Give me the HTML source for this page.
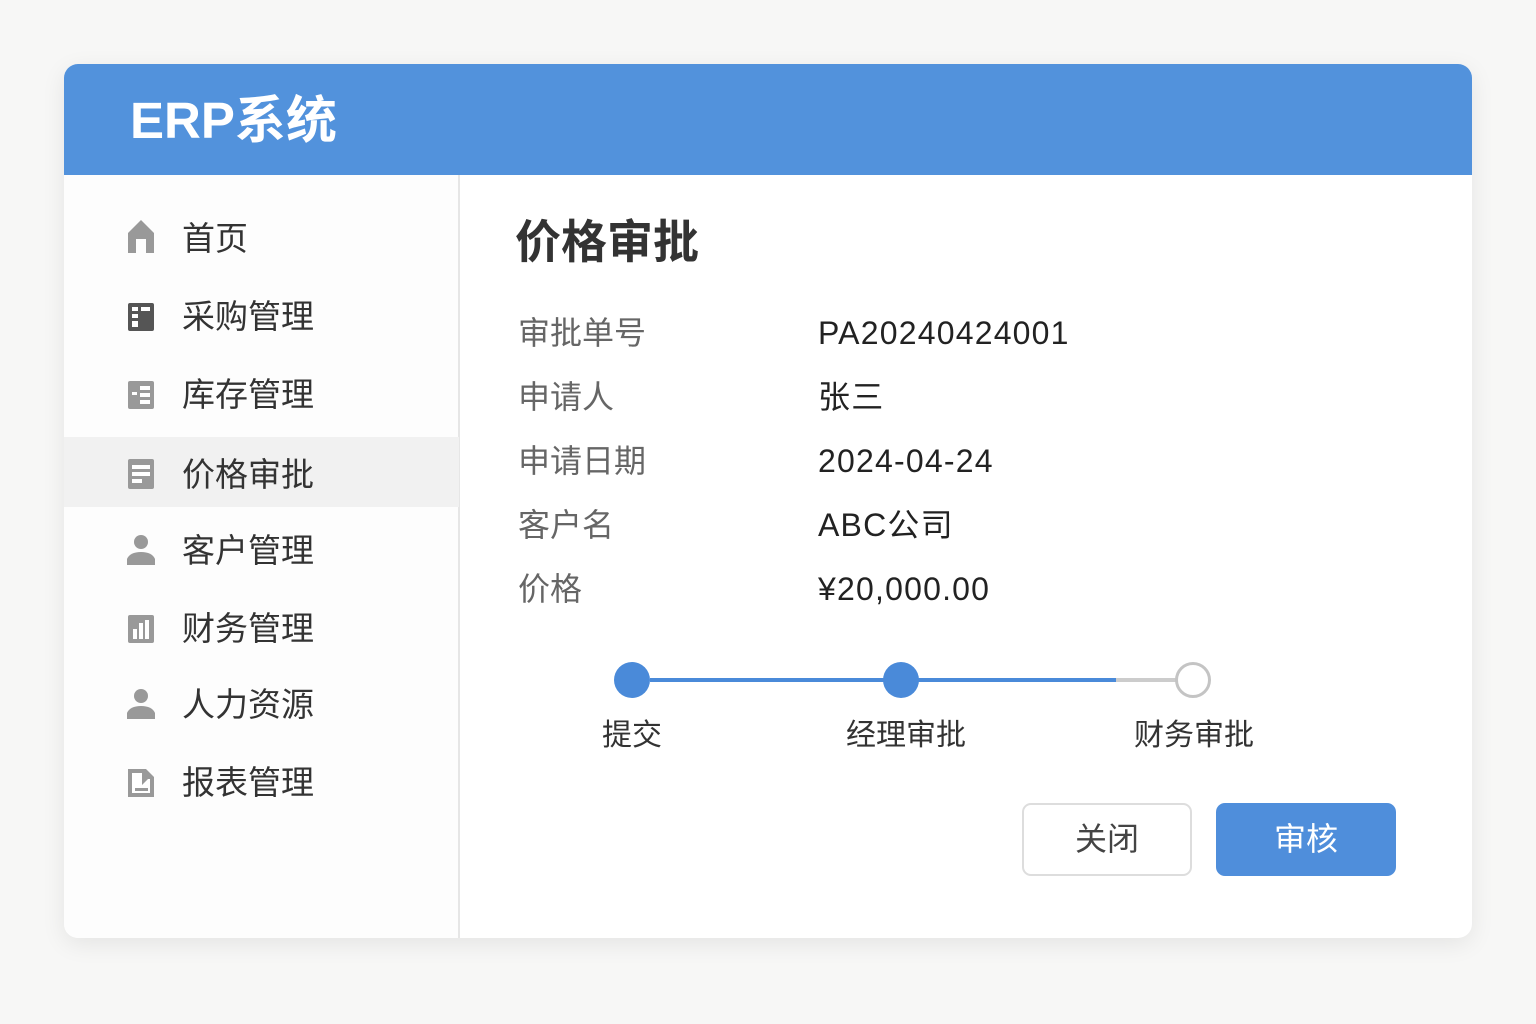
<!DOCTYPE html>
<html><head><meta charset="utf-8"><style>
*{margin:0;padding:0;box-sizing:border-box}
body{width:1536px;height:1024px;background:#f7f7f6;font-family:"Liberation Sans","Noto Sans CJK SC",sans-serif;position:relative;overflow:hidden}
.card{position:absolute;left:64px;top:64px;width:1408px;height:874px;background:#fff;border-radius:14px;box-shadow:0 6px 24px rgba(0,0,0,.08);overflow:hidden}
.hd{position:absolute;left:0;top:0;width:100%;height:111px;background:#5292dc}
.hd span{position:absolute;left:66px;top:25px;font-size:51px;font-weight:bold;color:#fff;line-height:64px}
.side{position:absolute;left:0;top:111px;width:396px;height:763px;border-right:2px solid #e6e6e6;background:#fdfdfd}
.item{position:absolute;left:0;width:395px;height:70px}
.item.act{background:#f1f1f1}
.item svg{position:absolute;left:62px;top:18px}
.item span{position:absolute;left:118px;top:15px;font-size:33px;line-height:46px;color:#333}
.a{position:absolute;white-space:nowrap}
.lb{font-size:32px;color:#666;left:454px;line-height:40px}
.vl{font-size:32px;color:#222;left:754px;line-height:40px;letter-spacing:1.2px}
.dot{position:absolute;width:36px;height:36px;border-radius:50%;background:#4a8ad9;top:598px}
.st{position:absolute;font-size:30px;color:#333;top:652px;line-height:40px;transform:translateX(-50%)}
</style></head><body>
<div class="card">
<div class="hd"><span>ERP系统</span></div>
<div class="side">
<div class="item" style="top:26px"><svg width="32" height="36" viewBox="0 0 32 36"><path d="M2 14 L15 1 L28 14 V34 H20 V20 H10 V34 H2Z" fill="#999"/></svg><span>首页</span></div>
<div class="item" style="top:104px"><svg width="32" height="36" viewBox="0 0 32 36"><rect x="2" y="6" width="26" height="28" rx="2" fill="#555"/><rect x="6" y="10" width="6" height="4" fill="#fff"/><rect x="15" y="10" width="9" height="4" fill="#fff"/><rect x="6" y="17" width="6" height="4" fill="#fff"/><rect x="6" y="24" width="6" height="6" fill="#fff"/></svg><span>采购管理</span></div>
<div class="item" style="top:182px"><svg width="32" height="36" viewBox="0 0 32 36"><rect x="2" y="6" width="26" height="28" rx="2" fill="#999"/><rect x="6" y="17" width="5" height="3" fill="#fff"/><rect x="14" y="11" width="10" height="4" fill="#fff"/><rect x="14" y="18" width="10" height="4" fill="#fff"/><rect x="14" y="25" width="10" height="4" fill="#fff"/></svg><span>库存管理</span></div>
<div class="item act" style="top:262px"><svg width="32" height="36" viewBox="0 0 32 36"><rect x="2" y="4" width="26" height="30" rx="2" fill="#999"/><rect x="6" y="10" width="18" height="4" fill="#fff"/><rect x="6" y="17" width="18" height="4" fill="#fff"/><rect x="6" y="24" width="10" height="4" fill="#fff"/></svg><span>价格审批</span></div>
<div class="item" style="top:338px"><svg width="32" height="36" viewBox="0 0 32 36"><circle cx="15" cy="11" r="7" fill="#999"/><path d="M1 34 V28 Q4 21 15 21 Q26 21 29 28 V34Z" fill="#999"/></svg><span>客户管理</span></div>
<div class="item" style="top:416px"><svg width="32" height="36" viewBox="0 0 32 36"><rect x="2" y="6" width="26" height="28" rx="2" fill="#999"/><rect x="7" y="20" width="4" height="10" fill="#fff"/><rect x="13" y="14" width="4" height="16" fill="#fff"/><rect x="19" y="11" width="4" height="19" fill="#fff"/></svg><span>财务管理</span></div>
<div class="item" style="top:492px"><svg width="32" height="36" viewBox="0 0 32 36"><circle cx="15" cy="11" r="7" fill="#999"/><path d="M1 34 V28 Q4 21 15 21 Q26 21 29 28 V34Z" fill="#999"/></svg><span>人力资源</span></div>
<div class="item" style="top:570px"><svg width="32" height="36" viewBox="0 0 32 36"><path d="M2 6 H20 L28 14 V34 H2Z" fill="#999"/><path d="M6 10 H16 V22 L22 16 H24 V30 H6Z" fill="#fff"/><rect x="9" y="25" width="13" height="3" fill="#999"/></svg><span>报表管理</span></div>
</div>
<div class="a" style="left:451px;top:148px;font-size:46px;font-weight:bold;color:#333;line-height:60px">价格审批</div>
<div class="a lb" style="top:249px">审批单号</div><div class="a vl" style="top:249px">PA20240424001</div>
<div class="a lb" style="top:313px">申请人</div><div class="a vl" style="top:313px">张三</div>
<div class="a lb" style="top:377px">申请日期</div><div class="a vl" style="top:377px">2024-04-24</div>
<div class="a lb" style="top:441px">客户名</div><div class="a vl" style="top:441px">ABC公司</div>
<div class="a lb" style="top:505px">价格</div><div class="a vl" style="top:505px">¥20,000.00</div>
<div class="a" style="left:586px;top:614px;width:466px;height:4px;background:#4a8ad9"></div>
<div class="a" style="left:1052px;top:614px;width:60px;height:4px;background:#ccc"></div>
<div class="dot" style="left:550px"></div>
<div class="dot" style="left:819px"></div>
<div class="dot" style="left:1111px;background:#fff;border:3px solid #c4c4c4"></div>
<div class="st" style="left:568px">提交</div>
<div class="st" style="left:842px">经理审批</div>
<div class="st" style="left:1130px">财务审批</div>
<div class="a" style="left:958px;top:739px;width:170px;height:73px;border:2px solid #ddd;border-radius:9px;font-size:32px;color:#444;text-align:center;line-height:69px">关闭</div>
<div class="a" style="left:1152px;top:739px;width:180px;height:73px;background:#4f8edb;border-radius:9px;font-size:32px;color:#fff;text-align:center;line-height:73px">审核</div>
</div>
</body></html>
